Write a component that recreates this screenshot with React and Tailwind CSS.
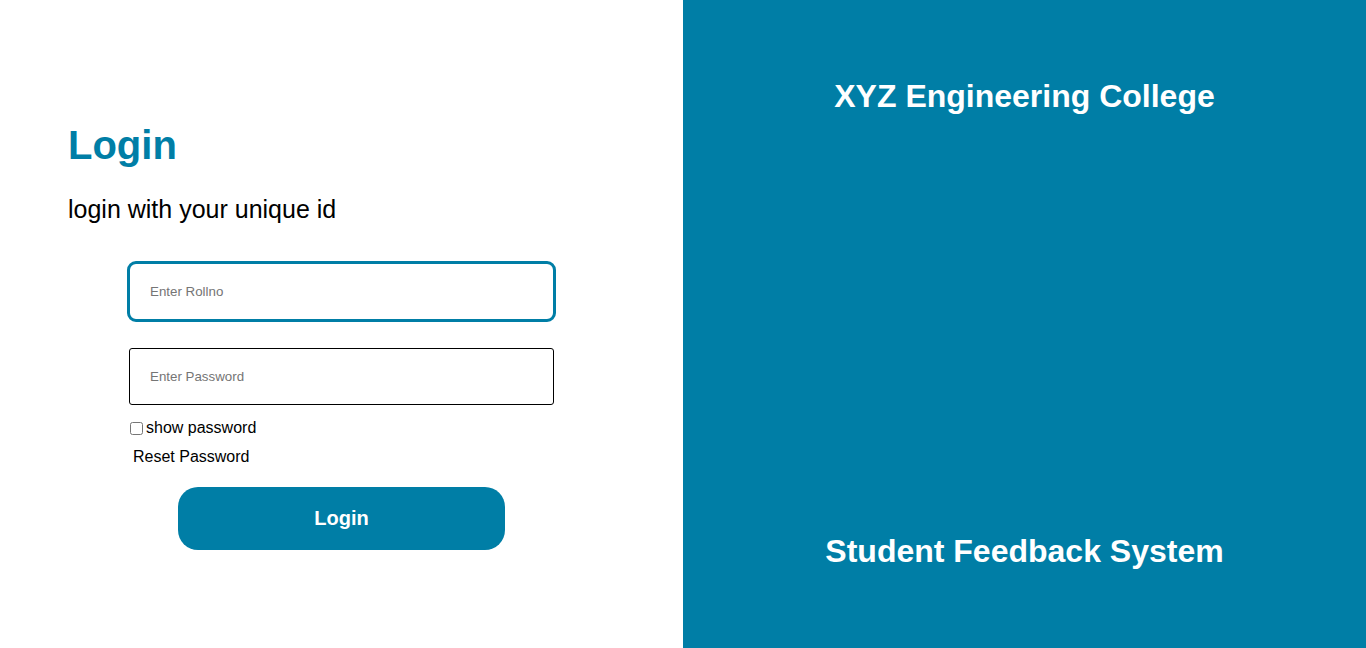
export default function App() {
  return (
    <div className="grid min-h-screen grid-cols-2 font-['Liberation_Sans',Arial,sans-serif]">
      <section className="bg-white">
        <h1 className="ml-[68px] mt-[122px] text-[40px] font-bold leading-[46px] text-[#007ea6]">Login</h1>
        <p className="ml-[68px] mt-[27px] text-[25px] leading-[29px] text-black">login with your unique id</p>

        <form className="mx-auto mt-[37px] flex w-[429px] flex-col" onSubmit={(e) => e.preventDefault()}>
          <input
            type="text"
            placeholder="Enter Rollno"
            className="h-[61px] w-[429px] rounded-[9px] border-[3px] border-[#007ea6] px-[20px] text-[13.33px] text-black outline-none placeholder:text-[#757575]"
          />
          <input
            type="password"
            placeholder="Enter Password"
            className="mx-auto mt-[26px] h-[57px] w-[425px] rounded-[3px] border border-black px-[20px] text-[13.33px] text-black outline-none placeholder:text-[#757575]"
          />
          <label className="mt-[14px] flex items-center gap-[3px] pl-[3px] text-[16px] leading-[18px] text-black">
            <input type="checkbox" className="h-[13px] w-[13px]" />
            show password
          </label>
          <a className="mt-[11px] pl-[6px] text-[16px] leading-[18px] text-black">Reset Password</a>
          <button
            type="submit"
            className="mx-auto mt-[21px] h-[63px] w-[327px] rounded-[20px] bg-[#007ea6] pb-[2px] text-[20px] font-bold text-white"
          >
            Login
          </button>
        </form>
      </section>

      <section className="flex flex-col items-center justify-between bg-[#007ea6] py-[78px] text-white">
        <h2 className="text-[32px] font-bold leading-[37px]">XYZ Engineering College</h2>
        <h2 className="text-[32px] font-bold leading-[37px]">Student Feedback System</h2>
      </section>
    </div>
  );
}
